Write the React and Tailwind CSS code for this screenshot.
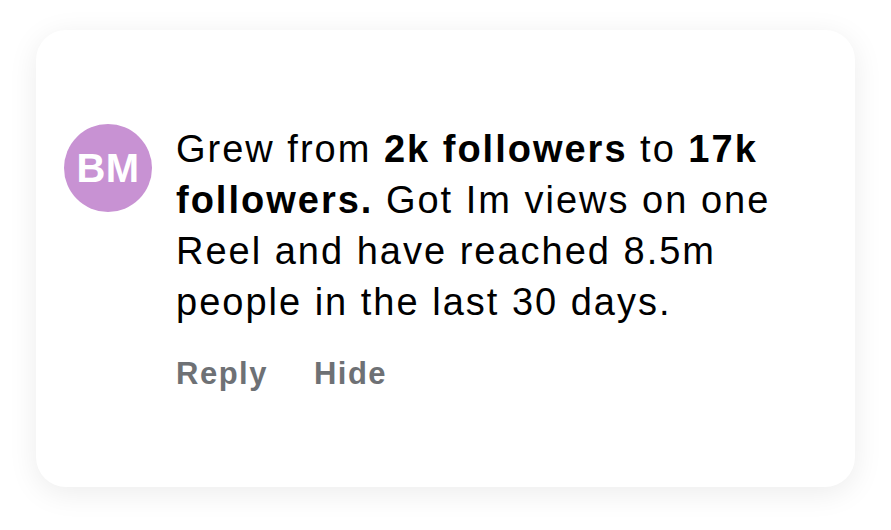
export default function App() {
  return (
    <div className="flex h-[530px] w-[891px] items-start bg-white font-['Liberation_Sans',Arial,sans-serif]">
      <div className="ml-[36px] mt-[30px] flex h-[457px] w-[819px] gap-[24px] rounded-[30px] bg-white pl-[28px] pt-[94px] shadow-[0_6px_30px_rgba(0,0,0,0.08)]">
        <div className="flex h-[88px] w-[88px] shrink-0 items-center justify-center rounded-full bg-[#c892d3] text-[40px] font-bold tracking-[0.5px] text-white">
          BM
        </div>
        <div>
          <p className="w-[615px] text-[38px] leading-[51px] tracking-[2px] text-black">
            Grew from <b>2k followers</b> to <b>17k followers.</b> Got Im views on one Reel and have reached 8.5m people in the last 30 days.
          </p>
          <div className="mt-[23px] flex gap-[46px] text-[31px] font-bold tracking-[1.5px] text-[#6e7175]">
            <span>Reply</span>
            <span>Hide</span>
          </div>
        </div>
      </div>
    </div>
  );
}
